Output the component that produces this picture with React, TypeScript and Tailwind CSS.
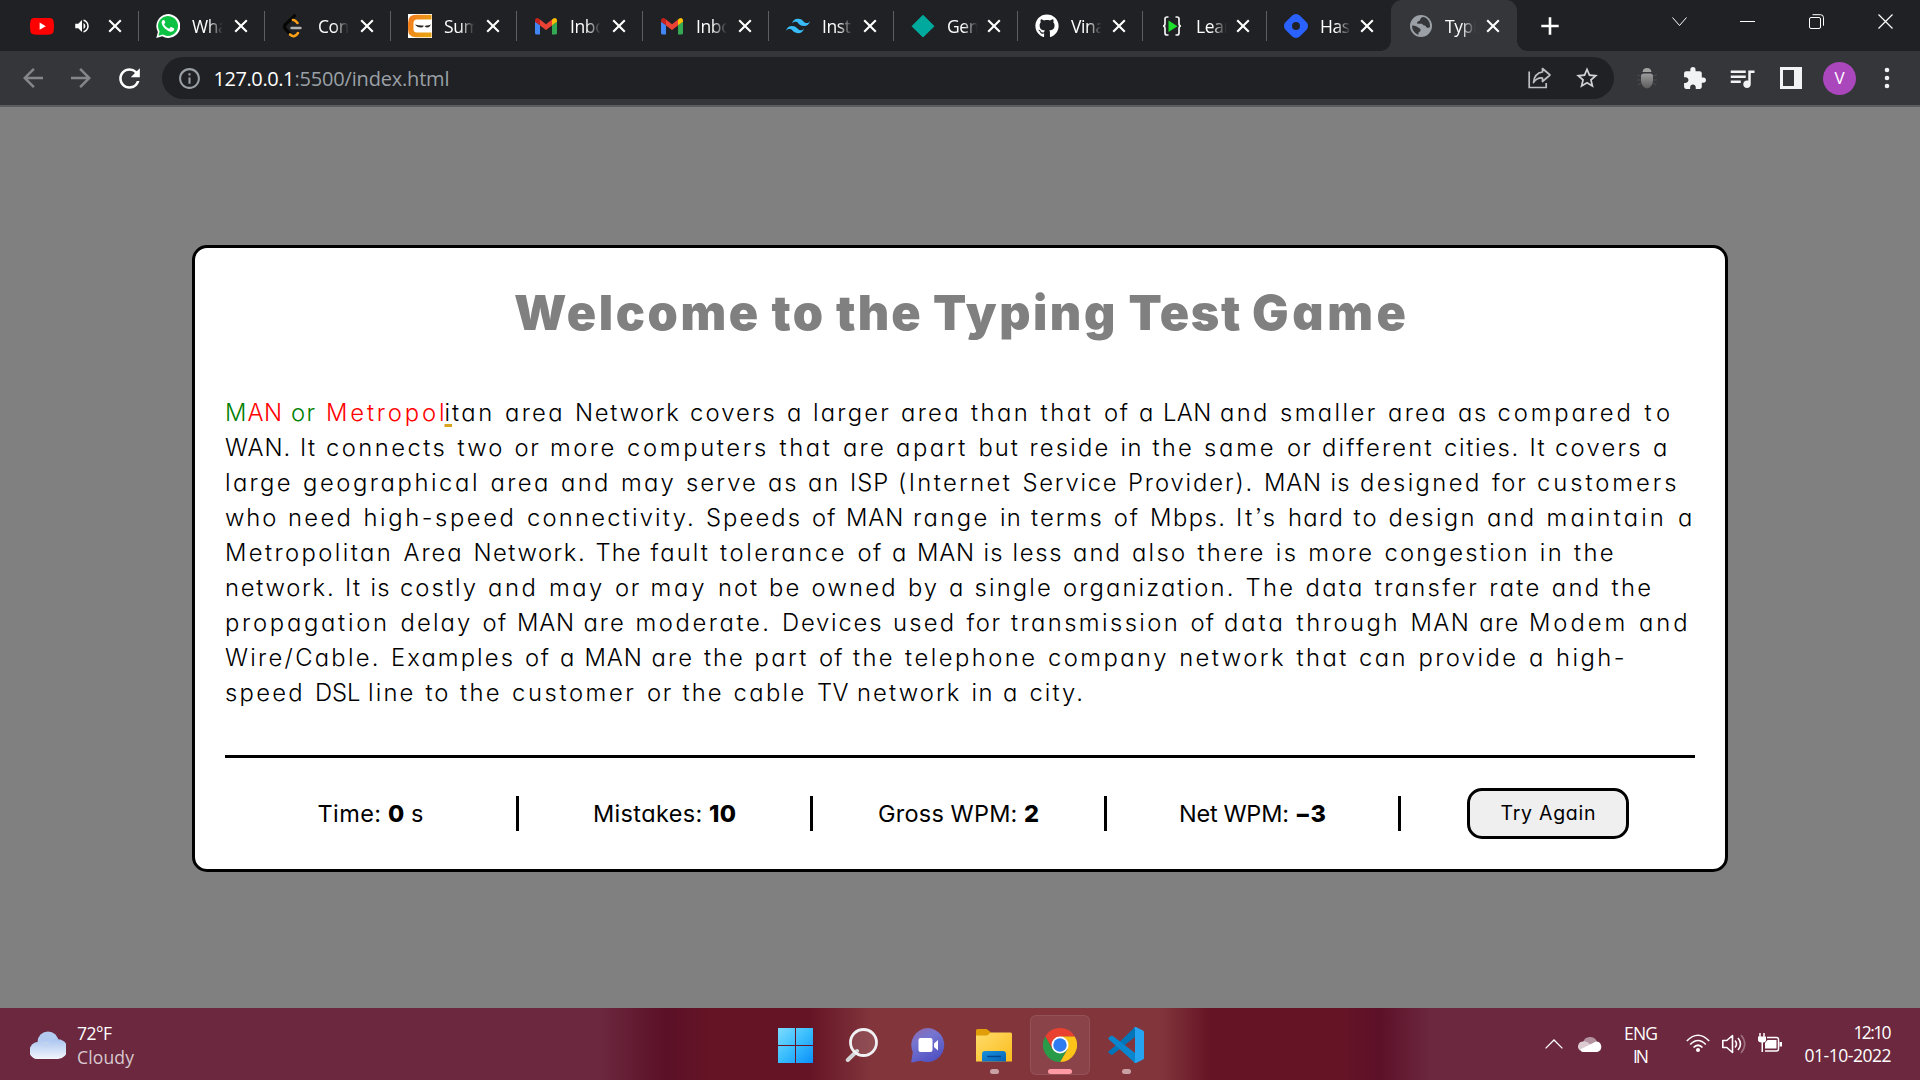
import React, { useLayoutEffect, useRef, useState } from "react";
import { MdExtension, MdRefresh, MdQueueMusic, MdStarBorder, MdArrowBack, MdArrowForward, MdInfoOutline, MdVolumeUp } from "react-icons/md";
import { FaGithub } from "react-icons/fa";
import { SiTailwindcss, SiHashnode } from "react-icons/si";

/* Spreads a run of text evenly over a given width. */
function Fit({ w, className = "", children }: { w: number; className?: string; children: React.ReactNode }) {
  const ref = useRef<HTMLSpanElement>(null);
  const [ls, setLs] = useState(0);
  useLayoutEffect(() => {
    const el = ref.current;
    if (!el) return;
    el.style.letterSpacing = "0px";
    const natural = el.getBoundingClientRect().width;
    const text = el.textContent || "";
    const n = Math.max(1, text.endsWith(" ") ? text.length : text.length - 1);
    const next = (w - natural) / n;
    el.style.letterSpacing = next + "px";
    setLs(next);
  }, [w]);
  return (
    <span className={"block whitespace-pre " + className} style={{ width: w }}>
      <span ref={ref} className="inline-block" style={{ letterSpacing: ls + "px" }}>{children}</span>
    </span>
  );
}

type Run = [start: number, text: string, className?: string];

/* One line of text set as consecutive runs, each reaching to the start of the next. */
function Line({ runs, end }: { runs: Run[]; end: number }) {
  return (
    <span className="flex">
      {runs.map(([x, t, c], i) => (
        <Fit key={i} w={(i + 1 < runs.length ? runs[i + 1][0] : end) - x} className={"shrink-0 " + (c || "")}>{t}</Fit>
      ))}
    </span>
  );
}

const Cross = ({ className = "" }: { className?: string }) => (
  <svg viewBox="0 0 14 14" className={"h-3.5 w-3.5 shrink-0 " + className}>
    <path d="M1.2 1.2 12.8 12.8M12.8 1.2 1.2 12.8" stroke="#fff" strokeWidth="2.1" />
  </svg>
);

const YouTube = () => (
  <svg viewBox="0 0 24 24" className="h-6 w-6">
    <path d="M4 4h16a4 4 0 0 1 3.6 3.500Q24.400 12 23.600 17a4 4 0 0 1-3.600 3.400Q12 21.200 4 20.400A4 4 0 0 1 .4 17Q-.4 12 .4 7.500A4 4 0 0 1 4 4Z" fill="#f00" />
    <path d="M9.600 8.600v7.200l6.200-3.600Z" fill="#fff" />
  </svg>
);
const WhatsApp = () => (
  <svg viewBox="0 0 24 24" className="h-6 w-6">
    <path d="M.3 24l1.600-6.100A12 11.900 0 1 1 6.300 22.300Z" fill="#fff" />
    <path d="M2.400 21.800l1.200-4.400A10 10 0 1 1 6.900 20.600Z" fill="#0dc143" />
    <path d="M8.500 6.500c-.3-.6-.6-.6-1-.6-.9.100-2 1.200-1.900 2.900.3 3.500 4.600 8 8.800 8.900 1.900.3 3.600-.9 3.800-2.500 0-.5 0-.8-.4-1l-2.400-1.200c-.4-.2-.7 0-.9.300l-1 1.200c-.2.300-.5.200-.8.100-2-.8-3.500-2.200-4.500-4-.2-.3 0-.6.200-.8l.7-.9c.1-.2.200-.4.100-.7Z" fill="#fff" />
  </svg>
);
const LeetCode = () => (
  <svg viewBox="0 0 24 24" className="h-6 w-6" fill="none" strokeWidth="3" strokeLinecap="round">
    <path d="M12.500 1.800 3.300 10.500Q1.600 12.500 3.300 14.800L7.500 19.500" stroke="#070706" strokeWidth="3.200" />
    <path d="M11 6q2-.5 4.500 3" stroke="#ffa116" strokeWidth="2.600" />
    <path d="M8 20.500q4.500 4 8-1.500" stroke="#ffa116" strokeWidth="2.600" />
    <path d="M9.500 14h9" stroke="#b3b3b3" strokeWidth="2.400" />
  </svg>
);
const Ninja = () => (
  <svg viewBox="0 0 24 24" className="h-6 w-6">
    <defs><linearGradient id="nj" x1="0" x2="1" y2=".5"><stop stopColor="#f47920" /><stop offset="1" stopColor="#e8a112" /></linearGradient></defs>
    <path d="M0 0h24v24H0Z" fill="#fff" />
    <path d="M8 .7h15.500V23.300H8Q0 23.300 0 15V9Q0 .7 8 .7Z" fill="url(#nj)" />
    <path d="M9 5.500h15v13H9Q5.500 18.500 5.500 15V9Q5.500 5.500 9 5.500Z" fill="#fff" />
    <path d="M7 10.500q3 1 7 1l2 .3-1.500 1.500q-5 .8-7.500-2.800ZM23 10.500q-2 .8-4.500 1l-2 .5 1.500 1.300q3.500.8 5-2.800Z" fill="#2d2522" />
  </svg>
);
const Gmail = () => (
  <svg viewBox="0 0 24 24" className="h-6 w-6">
    <path d="M1 7.500v11.500q0 1.500 1.500 1.500H6v-9.500Z" fill="#4285f4" />
    <path d="M18 11v9.500h3.500q1.500 0 1.500-1.500V7.500Z" fill="#34a853" />
    <path d="M6 5.500v6L12 16l6-4.500v-6l-6 4.700Z" fill="#ea4335" />
    <path d="M1 6.500Q1 4 3.500 4 4.500 4 6 5.500v5.700L1 7.800Z" fill="#c5221f" />
    <path d="M23 6.500Q23 4 20.500 4 19.500 4 18 5.500v5.700l5-3.400Z" fill="#fbbc04" />
  </svg>
);
const Diamond = () => (
  <svg viewBox="0 0 24 24" className="h-6 w-6"><path d="M12 1.200 23 12.300 12 23 1 12.300Z" fill="#00a99d" stroke="#00a99d" strokeLinejoin="round" /></svg>
);
const Braces = () => (
  <svg viewBox="0 0 24 24" className="h-6 w-6">
    <path d="M8.500 3H7Q5 3 5 5v4.500Q5 12 3 12q2 0 2 2.500V19q0 2 2 2h1.500M15.500 3H17q2 0 2 2v4.500Q19 12 21 12q-2 0-2 2.500V19q0 2-2 2h-1.500" fill="none" stroke="#f2f2f2" strokeWidth="1.700" />
    <path d="M8.500 6.500v11.500L17.500 12.200Z" fill="#1be12b" />
  </svg>
);
const Globe = () => (
  <svg viewBox="0 0 24 24" className="h-6 w-6">
    <circle cx="12" cy="12" r="11" fill="#9aa0a6" />
    <path d="M14 3q-3 1-3 3.500-3 .5-3 3 2 .5 5 .3 1 2 3.500 2 .5 2 2.500 2.200l2-1q.3-6-4-9-1.500-1-3-1ZM3 11.500q4-.5 7 2.500 2 .5 1.500 3-2.500 1-2.300 4Q3 18 3 11.500Z" fill="#35363a" />
  </svg>
);

const tabs: { w: string; icon: React.ReactNode; text?: string; active?: boolean }[] = [
  { w: "w-[126px]", icon: <YouTube /> },
  { w: "w-[126px]", icon: <WhatsApp />, text: "Wha" },
  { w: "w-[126px]", icon: <LeetCode />, text: "Con" },
  { w: "w-[126px]", icon: <Ninja />, text: "Sum" },
  { w: "w-[126px]", icon: <Gmail />, text: "Inbo" },
  { w: "w-[126px]", icon: <Gmail />, text: "Inbo" },
  { w: "w-[125px]", icon: <SiTailwindcss className="h-6 w-6 text-[#38bdf8]" />, text: "Inst" },
  { w: "w-[124px]", icon: <Diamond />, text: "Gen" },
  { w: "w-[125px]", icon: <FaGithub className="h-6 w-6 text-white" />, text: "Vina" },
  { w: "w-[124px]", icon: <Braces />, text: "Lear" },
  { w: "w-[124px]", icon: <SiHashnode className="h-6 w-6 text-[#2962ff]" />, text: "Has" },
  { w: "w-[126px]", icon: <Globe />, text: "Typi", active: true },
];

function TabStrip() {
  return (
    <div className="flex h-[51px] bg-[#202124] pl-[13px]">
      {tabs.map((t, i) => (
        <div key={i} className={"relative flex h-[51px] shrink-0 items-center pl-[17px] " + t.w + (t.active ? " rounded-t-[11px] bg-[#35363a]" : "")}>
          {t.active && (
            <>
              <span className="absolute bottom-0 -left-2.5 h-2.5 w-2.5 bg-[radial-gradient(circle_at_0_0,transparent_9.5px,#35363a_10px)]" />
              <span className="absolute -right-2.5 bottom-0 h-2.5 w-2.5 bg-[radial-gradient(circle_at_100%_0,transparent_9.5px,#35363a_10px)]" />
            </>
          )}
          <span className={"flex w-6 shrink-0 justify-center" + (t.active ? " ml-px" : "")}>{t.icon}</span>
          {t.text ? (
            <span className="ml-3 w-8 text-[17.5px] leading-6 tracking-[-0.4px] whitespace-nowrap text-white [mask-image:linear-gradient(to_right,black_50%,transparent_96%)]">{t.text}</span>
          ) : (
            <MdVolumeUp className="ml-[19px] h-[18px] w-[18px] text-white" />
          )}
          <Cross className="mr-[17px] ml-auto" />
          {!t.active && i !== 10 && <span className="absolute top-[11px] right-0 h-[30px] w-px bg-[#5c5e62]" />}
        </div>
      ))}
      <svg viewBox="0 0 18 18" className="mt-[16.5px] ml-[24px] h-[18px] w-[18px]"><path d="M9 .3v17.400M.3 9h17.400" stroke="#fff" strokeWidth="2.600" /></svg>
      <svg viewBox="0 0 15 15" className="mt-[14px] ml-auto h-[15px] w-[15px]" fill="none" stroke="#fff"><path d="M.5 3.500 7.500 11.500 14.500 3.500" /></svg>
      <svg viewBox="0 0 15 15" className="mt-[14px] ml-[53px] h-[15px] w-[15px]"><path d="M0 7.500h15" stroke="#fff" /></svg>
      <svg viewBox="0 0 15 15" className="mt-[14px] ml-[54px] h-[15px] w-[15px]" fill="none" stroke="#fff"><rect x=".5" y="3.500" width="11" height="11" rx="1.500" /><path d="M3.500 .7h8q3 0 3 3v8" /></svg>
      <svg viewBox="0 0 15 15" className="mt-[14px] mr-[27px] ml-[54px] h-[15px] w-[15px]" stroke="#fff" strokeWidth="1.200"><path d="M.5.5l14 14M14.500.5l-14 14" /></svg>
    </div>
  );
}

function Toolbar() {
  return (
    <div className="flex h-[56px] items-center border-b-2 border-[#5b5c5f] bg-[#35363a]">
      <MdArrowBack className="ml-[18px] h-[30px] w-[30px] text-[#85868a]" />
      <MdArrowForward className="ml-[18px] h-[30px] w-[30px] text-[#85868a]" />
      <MdRefresh className="ml-[18px] h-[31px] w-[31px] text-white" />
      <div className="ml-[17px] flex h-[42px] w-[1452px] items-center rounded-full bg-[#202124]">
        <MdInfoOutline className="ml-[14.5px] h-[25px] w-[25px] text-[#9aa0a6]" />
        <div className="ml-[12px] flex pt-px text-[20px] leading-7">
          <Fit w={81} className="text-white">127.0.0.1</Fit>
          <Fit w={155} className="text-[#9aa0a6]">:5500/index.html</Fit>
        </div>
        <svg viewBox="0 0 24 22" className="ml-auto h-[22px] w-6" fill="none" stroke="#bdbfc2" strokeWidth="1.700">
          <path d="M1.200 4.500v16h17v-4.500" />
          <path d="M14.500 1.500 22 8l-7.500 6.500V11Q9 10.500 5.500 15.500 6.500 6 14.500 5Z" strokeLinejoin="round" />
        </svg>
        <MdStarBorder className="mr-[14px] ml-[22px] h-[26px] w-[26px] text-[#d0d1d3]" />
      </div>
      <svg viewBox="0 0 22 22" className="ml-[22px] h-[22px] w-[22px]">
        <defs><linearGradient id="bg" x2="0" y2="1"><stop stopColor="#9b9b9b" /><stop offset="1" stopColor="#5c5c5c" /></linearGradient></defs>
        <path d="M1 8l4 1M1 13h4M2 18l3-2M21 8l-4 1M21 13h-4M20 18l-3-2" stroke="#484a4e" strokeWidth="1.200" />
        <path d="M6.500 5Q7 1 11 1t4.500 4Z" fill="#a3a3a3" />
        <path d="M5 9Q5 6.500 8 6.500h6q3 0 3 2.500v5q-1 7-6 7.500Q6 21 5 14Z" fill="url(#bg)" />
      </svg>
      <MdExtension className="ml-[24px] h-[25px] w-[25px] text-[#f1f3f4]" />
      <MdQueueMusic className="ml-[20px] h-[30px] w-[30px] text-[#f1f3f4]" />
      <svg viewBox="0 0 22 22" className="ml-[23px] h-[22px] w-[22px]"><path fillRule="evenodd" d="M0 0h22v22H0ZM3 3v16h11V3Z" fill="#f1f3f4" /></svg>
      <span className="ml-[21px] flex h-[33px] w-[33px] items-center justify-center rounded-full bg-[#ab47bc] text-[17px] text-white">V</span>
      <svg viewBox="0 0 6 22" className="ml-[28px] h-[22px] w-1.5" fill="#f1f3f4"><circle cx="3" cy="3" r="2.300" /><circle cx="3" cy="11" r="2.300" /><circle cx="3" cy="19" r="2.300" /></svg>
    </div>
  );
}

const RED = "text-[#f00]";
const GREEN = "text-[#008000]";
const NEXT = "[&>span]:underline decoration-[#daa520] [&>span]:decoration-[#daa520] [&>span]:decoration-[3px] [&>span]:underline-offset-[2.5px] [&>span]:[text-decoration-skip-ink:none]";

const title: Run[] = [[514, "Welcome "], [771.5, "to "], [836, "the "], [933, "Typing "], [1128.5, "Test "], [1252, "Game"]];

const lines: { end: number; runs: Run[] }[] = [
  { end: 1670, runs: [[225, "M", GREEN], [247.5, "AN ", RED], [291, "or ", GREEN], [326, "Metropol", RED], [444.5, "i", NEXT], [452, "tan "], [505, "area "], [575, "Network "], [690, "covers "], [787, "a "], [813, "larger "], [901, "area "], [971, "than "], [1040.5, "that "], [1104, "of "], [1139, "a "], [1163, "LAN "], [1220, "and "], [1280, "smaller "], [1388, "area "], [1458, "as "], [1497.5, "compared "], [1644.5, "to"]] },
  { end: 1668, runs: [[225, "WAN. "], [300, "It "], [326, "connects "], [457.5, "two "], [514.5, "or "], [550, "more "], [627, "computers "], [779.5, "that "], [843, "are "], [896, "apart "], [978.5, "but "], [1029.5, "reside "], [1120.5, "in "], [1152.5, "the "], [1204, "same "], [1287, "or "], [1322, "different "], [1444, "cities. "], [1529.5, "It "], [1555, "covers "], [1653, "a"]] },
  { end: 1676.5, runs: [[225, "large "], [303, "geographical "], [490.5, "area "], [561, "and "], [621, "may "], [686, "serve "], [768, "as "], [808, "an "], [850, "ISP "], [898, "(Internet "], [1022.5, "Service "], [1128, "Provider). "], [1264, "MAN "], [1330.5, "is "], [1360, "designed "], [1492, "for "], [1537, "customers"]] },
  { end: 1692, runs: [[225, "who "], [288, "need "], [363.5, "high-speed "], [527, "connectivity. "], [706, "Speeds "], [812, "of "], [846, "MAN "], [913, "range "], [1000, "in "], [1031, "terms of "], [1150, "Mbps. "], [1236, "It’s "], [1288, "hard "], [1353.5, "to "], [1388.5, "design "], [1487, "and "], [1546.5, "maintain "], [1678, "a"]] },
  { end: 1613.5, runs: [[225, "Metropolitan "], [403.5, "Area "], [473.5, "Network. "], [595.5, "The "], [650.5, "fault "], [720, "tolerance "], [857.5, "of "], [892, "a "], [917, "MAN "], [983.5, "is "], [1012.5, "less "], [1073, "and "], [1132, "also there is more congestion in the"]] },
  { end: 1651, runs: [[225, "network. "], [345, "It "], [370.5, "is "], [400, "costly "], [488, "and "], [549, "may "], [615, "or "], [650.5, "may "], [718, "not "], [769, "be "], [811.5, "owned "], [908, "by "], [949, "a "], [974.5, "single "], [1063, "organization. "], [1245.5, "The data transfer rate and the"]] },
  { end: 1687.5, runs: [[225, "propagation "], [400.5, "delay "], [482.5, "of "], [517, "MAN "], [583.5, "are "], [635.5, "moderate. "], [782, "Devices "], [893, "used "], [966.5, "for "], [1011, "transmission "], [1190.5, "of "], [1224, "data "], [1296.5, "through "], [1410.5, "MAN are "], [1529, "Modem and"]] },
  { end: 1624.5, runs: [[225, "Wire/Cable. "], [391, "Examples "], [525, "of "], [560, "a "], [584.5, "MAN "], [651.5, "are "], [704, "the "], [754.5, "part "], [819, "of "], [853, "the "], [905, "telephone "], [1048, "company network that can provide a high-"]] },
  { end: 1083, runs: [[225, "speed "], [315, "DSL "], [368, "line "], [425.5, "to "], [460, "the "], [512, "customer "], [647, "or "], [682.5, "the "], [733.5, "cable "], [817, "TV "], [857, "network "], [971.5, "in "], [1003, "a "], [1029.5, "city."]] },
];

const stats: [number, string, string, string][] = [
  [106, "Time: ", "0", " s"],
  [143, "Mistakes: ", "10", ""],
  [161, "Gross WPM: ", "2", ""],
  [147, "Net WPM: ", "−3", ""],
];

function Card() {
  return (
    <div className="h-[627px] w-[1536px] rounded-[15px] border-[3px] border-black bg-white px-[30px] font-[Inter,sans-serif] text-black [font-feature-settings:'cv11','ss03']">
      <h1 className="flex h-[128px] justify-center pt-[36px] text-[48.5px] leading-[58px] font-black text-[#808080] [word-spacing:-1.5px]">
        <Line runs={title} end={1406} />
      </h1>
      <div className="mt-[19px] text-[23.8px] leading-[35px] font-[350] [word-spacing:1.2px]">
        {lines.map((l, i) => <Line key={i} {...l} />)}
      </div>
      <div className="mt-[45px] h-[3px] bg-black" />
      <div className="mt-[30px] grid h-[51px] grid-cols-5 items-center">
        {stats.map(([w, a, b, c]) => (
          <div key={a} className="flex h-[35px] items-center justify-center border-r-[3px] border-black text-[23.5px] leading-[34px] font-normal [word-spacing:-0.5px]">
            <Fit w={w}>{a}<b className="font-extrabold">{b}</b>{c}</Fit>
          </div>
        ))}
        <div className="flex justify-center">
          <button className="flex h-[51px] w-[162px] items-center justify-center rounded-[15px] border-[3px] border-black bg-[#efefef] pt-px text-[19.5px] font-normal">
            <Fit w={95} className="text-left">Try Again</Fit>
          </button>
        </div>
      </div>
    </div>
  );
}

function Taskbar() {
  return (
    <div className="flex h-[72px] bg-[linear-gradient(to_right,#6b283e_600px,#5b1028_665px,#651425_710px,#651425_810px,#82363c_872px,#82363c_1160px,#651425_1210px,#651425_1340px,#5d1029_1380px,#6b283e_1430px)] text-[17.5px] leading-6 text-white">
      <div className="flex w-[778px]">
        <svg viewBox="0 0 36 28" className="mt-[22.5px] ml-[30px] h-7 w-9">
          <defs><linearGradient id="cl" x2="0" y2="1"><stop stopColor="#a9c4ef" /><stop offset="1" stopColor="#f2f6fc" /></linearGradient></defs>
          <circle cx="18" cy="11" r="10.500" fill="#b3cbf1" />
          <rect y="11" width="28" height="17" rx="8" fill="#bfd2ee" />
          <path d="M8 28a8 8 0 0 1-1-16Q13 10 16 17q3-9 11-9a9.500 9.500 0 0 1 1 20Z" fill="url(#cl)" />
        </svg>
        <div className="ml-[11px] pt-[13px]">
          <Fit w={35}>72°F</Fit>
          <Fit w={57} className="text-white/75">Cloudy</Fit>
        </div>
      </div>
      <svg viewBox="0 0 35 35" className="mt-5 h-[35px] w-[35px]">
        <defs><linearGradient id="wn" x2="1" y2="1"><stop stopColor="#7cdcff" /><stop offset=".5" stopColor="#39bdfd" /><stop offset="1" stopColor="#0a8ffb" /></linearGradient></defs>
        <path d="M0 0h17v17H0ZM18 0h17v17H18ZM0 18h17v17H0ZM18 18h17v17H18Z" fill="url(#wn)" />
      </svg>
      <svg viewBox="0 0 34 35" className="mt-5 ml-[32px] h-[35px] w-[34px]">
        <path d="M12 23 2.800 32" stroke="#d3d5d8" strokeWidth="4" strokeLinecap="round" />
        <circle cx="18.500" cy="14.500" r="13" fill="#fff" fillOpacity=".12" stroke="#f0f1f3" strokeWidth="2.800" />
      </svg>
      <svg viewBox="0 0 34 35" className="mt-5 ml-[32px] h-[35px] w-[34px]">
        <defs><linearGradient id="ch" x2=".5" y2="1"><stop stopColor="#9067a8" /><stop offset=".4" stopColor="#7675d0" /><stop offset="1" stopColor="#5354c4" /></linearGradient></defs>
        <path d="M17 0a17 17 0 1 1-7 32.800L1 34.500Q-.3 34.500.4 33L1.800 24A17 17 0 0 1 17 0Z" fill="url(#ch)" />
        <rect x="7.500" y="10" width="14" height="14" rx="2" fill="#fff" /><path d="M23 15.500 27 12v10.500L23 19Z" fill="#fff" />
      </svg>
      <div className="ml-[31px] flex w-9 flex-col items-center">
        <svg viewBox="0 0 36 33" className="mt-[21px] h-[33px] w-9">
          <defs><linearGradient id="fo" x2="1" y2="1"><stop stopColor="#ffdc6b" /><stop offset="1" stopColor="#fbbc1c" /></linearGradient><linearGradient id="fb" x2="1" y2="1"><stop stopColor="#1992dc" /><stop offset="1" stopColor="#0560b5" /></linearGradient></defs>
          <path d="M0 1.500Q0 0 1.500 0H10q1 0 2 1l3 2.500V8H0Z" fill="#e09e09" />
          <path d="M0 6.500h11L15 3.500H34.500Q36 3.500 36 5v27.500H0Z" fill="url(#fo)" />
          <path d="M6 32.500V25q0-3 3-3H27q3 0 3 3v7.500Z" fill="url(#fb)" /><path d="M11 27.500h14" stroke="#04478d" strokeWidth="1.500" />
        </svg>
        <span className="mt-[7px] h-[5px] w-[9px] rounded-full bg-[#c9a1a5]" />
      </div>
      <div className="mt-[7px] ml-[18px] flex h-[60px] w-[60px] flex-col items-center rounded-md border border-white/8 bg-white/7">
        <svg viewBox="0 0 48 48" className="mt-[12px] h-[34px] w-[34px]">
          <path d="M3.200 12A24 24 0 0 1 44.800 12H24L13.600 30Z" fill="#ea4030" />
          <path d="M44.800 12A24 24 0 0 1 24 48L34.400 30 24 12Z" fill="#fcc419" />
          <path d="M24 48A24 24 0 0 1 3.200 12L13.600 30H34.400Z" fill="#299a48" />
          <circle cx="24" cy="24" r="12" fill="#fff" /><circle cx="24" cy="24" r="9.500" fill="#2e7cf0" />
        </svg>
        <span className="mt-[7px] h-[5px] w-6 shrink-0 rounded-full bg-[#ff99a3]" />
      </div>
      <div className="ml-[18px] flex w-9 flex-col items-center">
        <svg viewBox="0 0 36 36" className="mt-[19px] h-9 w-9">
          <path d="M27 0 10.500 16 5.500 20.300 1 24Q-.3 25 .8 26l2 1.500q1 .7 2 0L27 10Z" fill="#0274b8" />
          <path d="M27 36 1 12.500Q-.3 11.500.8 10.500l2-1.500q1-.6 2 .1L27 26Z" fill="#0a86cf" />
          <path d="M26 .5Q27-.3 28.500.3L35 3.500q1 .5 1 1.500V31q0 1-1 1.500l-6.500 3.200q-1.500.6-2.500-.2Q27 35 27 33V3Q27 1 26 .5Z" fill="#26a3f1" />
        </svg>
        <span className="mt-[6px] h-[5px] w-[9px] rounded-full bg-[#c9a1a5]" />
      </div>
      <svg viewBox="0 0 18 10" className="mt-[31px] ml-auto h-2.5 w-[18px]"><path d="M.6 9.400 9 1l8.400 8.400" fill="none" stroke="#fff" strokeWidth="1.300" /></svg>
      <svg viewBox="0 0 24 16" className="mt-[28px] ml-[15px] h-4 w-6">
        <path d="M5 6a7.500 7.500 0 0 1 14-.5L13 9Z" fill="#b493a0" /><path d="M5 5.500q4-1 8 3.500L2 14.500A5 5 0 0 1 5 5.500Z" fill="#dccbd1" />
        <path d="M2 13.500 18 5.500A5.300 5.300 0 0 1 19 16H5Q3 16 2 13.500Z" fill="#fff" />
      </svg>
      <div className="ml-[22px] flex flex-col items-center pt-[14px] leading-[23px]">
        <Fit w={34}>ENG</Fit>
        <Fit w={16}>IN</Fit>
      </div>
      <svg viewBox="0 0 24 19" className="mt-[26px] ml-[28px] h-[19px] w-6" fill="none" stroke="#fff" strokeWidth="1.700">
        <path d="M.8 7Q12-4.500 23.200 7M4.200 10.500Q12 2.500 19.800 10.500M7.500 13.500Q12 9 16.500 13.500" /><circle cx="12" cy="16" r="2" fill="#fff" stroke="none" />
      </svg>
      <svg viewBox="0 0 24 20" className="mt-[26px] ml-[12px] h-5 w-6" fill="none" stroke="#fff" strokeWidth="1.600">
        <path d="M.8 6.500h4L10.500 1.500v17L4.800 13.500h-4Z" strokeLinejoin="round" /><path d="M13 6.500q3 3.500 0 7M16 4q5 6 0 12" /><path d="M19 1q7.500 9 0 18" stroke="#9d6f7f" />
      </svg>
      <svg viewBox="0 0 24 20" className="mt-[25px] ml-[12px] h-5 w-6">
        <path d="M2 0v4M6 0v4" stroke="#fff" strokeWidth="1.500" /><path d="M0 3.500h8V7q0 2-3 2.500V19H3.500V9.500Q0 9 0 7Z" fill="#fff" />
        <path d="M9 4.500h9.500q2 0 2 2v9.500q0 2-2 2H7" fill="none" stroke="#fff" strokeWidth="1.500" /><path d="M9.500 7h9v8.500H7V10Z M21.500 9h2.500v4.500h-2.500Z" fill="#fff" />
      </svg>
      <div className="mr-[28.5px] ml-[22.5px] flex flex-col items-end pt-[13px] leading-[23px]">
        <Fit w={38}>12:10</Fit>
        <Fit w={87}>01-10-2022</Fit>
      </div>
    </div>
  );
}

export default function App() {
  return (
    <div className="flex h-[1080px] w-[1920px] flex-col overflow-hidden bg-[#808080] font-['Open_Sans','Noto_Sans',sans-serif]">
      <TabStrip />
      <Toolbar />
      <main className="flex flex-1 items-center justify-center pt-0.5">
        <Card />
      </main>
      <Taskbar />
    </div>
  );
}
